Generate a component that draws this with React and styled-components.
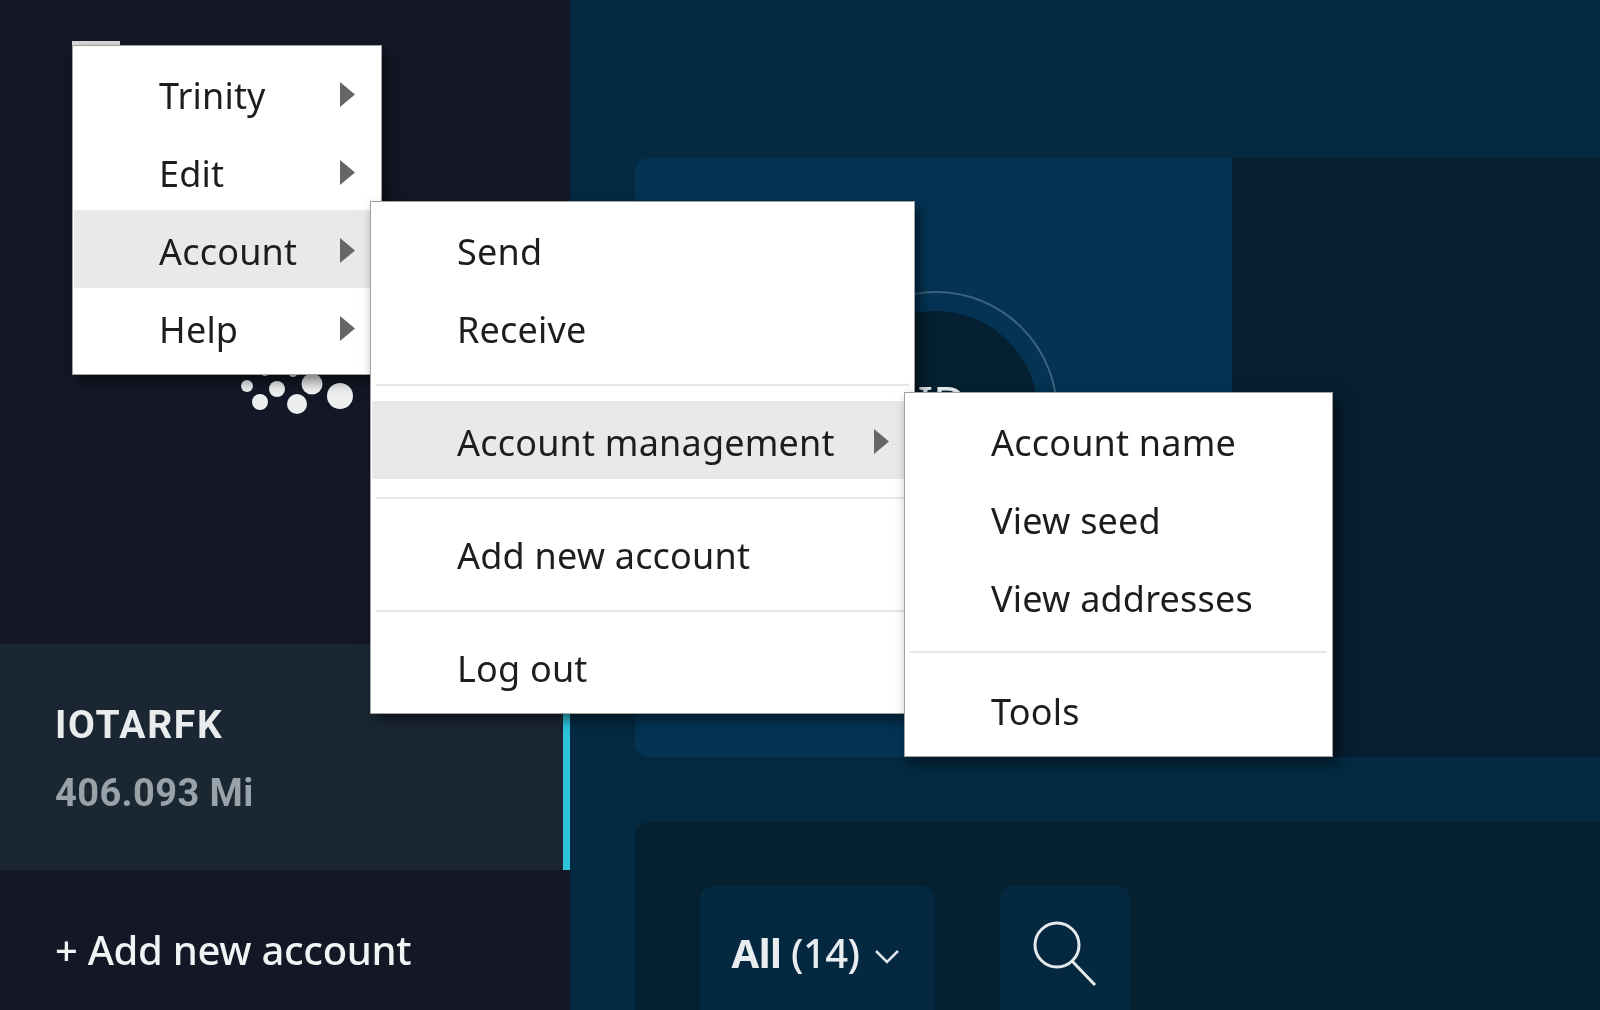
import React from 'react';
import styled, { createGlobalStyle } from 'styled-components';

const Global = createGlobalStyle`
  html, body { margin: 0; padding: 0; background: #022a40; }
  #root { width: 1600px; height: 1010px; overflow: hidden; }
`;

const Page = styled.div`
  position: relative;
  width: 1600px;
  height: 1010px;
  display: flex;
  overflow: hidden;
  background: #032a41;
  font-family: "Noto Sans", "Open Sans", sans-serif;
  filter: blur(0.55px);
`;

const Sidebar = styled.aside`
  width: 570px;
  flex: none;
  display: flex;
  flex-direction: column;
  background: #141725;
`;

const LogoWrap = styled.div`
  height: 644px;
  padding: 370px 0 0 235px;
  box-sizing: border-box;
`;

const AccountRow = styled.div`
  height: 226px;
  box-sizing: border-box;
  padding: 59px 0 0 55px;
  background: #1a2733;
  border-right: 7px solid #2ec5dc;
`;

const AccountName = styled.div`
  font-family: "Roboto", sans-serif;
  font-size: 39px;
  letter-spacing: 1.7px;
  line-height: 44px;
  font-weight: 700;
  color: #e9eced;
`;

const AccountBalance = styled.div`
  margin-top: 24px;
  font-family: "Roboto", sans-serif;
  font-size: 38px;
  letter-spacing: 0.4px;
  line-height: 44px;
  font-weight: 700;
  color: #98a2a9;
`;

const AddAccount = styled.div`
  flex: 1;
  display: flex;
  align-items: center;
  padding: 18px 0 0 55px;
  font-size: 40px;
  font-weight: 500;
  letter-spacing: -0.3px;
  color: #f2f3f4;
`;

const Main = styled.main`
  flex: 1;
  padding: 158px 0 0 65px;
  display: flex;
  flex-direction: column;
  gap: 65px;
`;

const TopRow = styled.div`
  height: 599px;
  display: flex;
`;

const BalancePanel = styled.section`
  position: relative;
  width: 597px;
  background: #043353;
  border-radius: 14px 0 0 14px;
`;

const Ring = styled.div`
  position: absolute;
  left: 179px;
  top: 133px;
  width: 244px;
  height: 244px;
  box-sizing: border-box;
  border: 2px solid #3c627c;
  border-radius: 50%;
  display: flex;
  align-items: center;
  justify-content: center;
`;

const RingInner = styled.div`
  width: 204px;
  height: 204px;
  box-sizing: border-box;
  padding: 0 0 22px 12px;
  border-radius: 50%;
  background: #052030;
  display: flex;
  align-items: center;
  justify-content: center;
  font-size: 46px;
  line-height: 1;
  color: #e8eef2;
`;

const ChartPanel = styled.section`
  flex: 1;
  background: #051f30;
`;

const BottomPanel = styled.section`
  flex: 1;
  display: flex;
  gap: 65px;
  padding: 64px 0 0 65px;
  background: #052030;
  border-radius: 14px 0 0 0;
`;

const FilterButton = styled.div`
  width: ${p => p.$w}px;
  height: 124px;
  box-sizing: border-box;
  padding-top: ${p => p.$pt}px;
  display: flex;
  justify-content: center;
  gap: 14px;
  background: #03283f;
  border-radius: 12px 12px 0 0;
`;

const FilterLabel = styled.span`
  font-size: 40px;
  line-height: 52px;
  color: #e9edf0;
  font-weight: 500;
  letter-spacing: -0.6px;
  b { font-weight: 700; }
`;

const Menu = styled.nav`
  position: absolute;
  left: ${p => p.$left}px;
  top: ${p => p.$top}px;
  width: ${p => p.$width}px;
  box-sizing: border-box;
  padding: 8px 1px;
  background: #fff;
  border: 1px solid #a0a0a0;
  box-shadow: 5px 6px 12px rgba(0, 0, 0, 0.5);
`;

const Item = styled.div`
  position: relative;
  height: 78px;
  display: flex;
  align-items: center;
  padding: 4px 0 0 85px;
  box-sizing: border-box;
  background: ${p => (p.$active ? '#e9e9e9' : 'transparent')};
  color: #1d1d1d;
  font-size: 36px;
  letter-spacing: 0.2px;
  white-space: nowrap;
`;

const Arrow = styled.svg`
  position: absolute;
  right: ${p => p.$right}px;
  top: 28px;
  width: 15px;
  height: 25px;
  fill: #666;
`;

const Separator = styled.div`
  height: 2px;
  margin: ${p => (p.$high ? '16px 4px 17px' : '18px 4px 15px')};
  background: #e6e6e6;
`;

const MenuTab = styled.div`
  position: absolute;
  left: 72px;
  top: 41px;
  width: 48px;
  height: 5px;
  background: #dcdcdc;
`;

const RightArrow = ({ right }) => (
  <Arrow $right={right} viewBox="0 0 15 25"><path d="M0 0 L15 12.5 L0 25 Z" /></Arrow>
);

const Logo = () => (
  <svg width="125" height="50" viewBox="0 0 125 50" fill="#eceef0">
    <circle cx="12" cy="16" r="6" />
    <circle cx="25" cy="32" r="8" />
    <circle cx="42" cy="19" r="8" />
    <circle cx="62" cy="34" r="10" />
    <circle cx="77" cy="14" r="10.5" />
    <circle cx="105" cy="26" r="13" />
    <circle cx="30" cy="2" r="4" />
    <circle cx="58" cy="3" r="4" />
  </svg>
);

export default function App() {
  return (
    <Page>
      <Global />
      <Sidebar>
        <LogoWrap><Logo /></LogoWrap>
        <AccountRow>
          <AccountName>IOTARFK</AccountName>
          <AccountBalance>406.093 Mi</AccountBalance>
        </AccountRow>
        <AddAccount>+ Add new account</AddAccount>
      </Sidebar>
      <Main>
        <TopRow>
          <BalancePanel>
            <Ring><RingInner>ID</RingInner></Ring>
          </BalancePanel>
          <ChartPanel />
        </TopRow>
        <BottomPanel>
          <FilterButton $w={235} $pt={41}>
            <FilterLabel><b>All</b> (14)</FilterLabel>
            <svg width="30" height="52" viewBox="0 0 30 52" fill="none" stroke="#dfe5e9" strokeWidth="2.5"><path d="M3 24 L14 35 L25 24" /></svg>
          </FilterButton>
          <FilterButton $w={130} $pt={34}>
            <svg width="66" height="66" viewBox="0 0 66 66" fill="none" stroke="#e4e9ec" strokeWidth="3"><circle cx="25" cy="25" r="22" /><path d="M40 41 L63 65" /></svg>
          </FilterButton>
        </BottomPanel>
      </Main>

      <MenuTab />
      <Menu $left={72} $top={45} $width={310}>
        <Item>Trinity<RightArrow right={25} /></Item>
        <Item>Edit<RightArrow right={25} /></Item>
        <Item $active>Account<RightArrow right={25} /></Item>
        <Item>Help<RightArrow right={25} /></Item>
      </Menu>
      <Menu $left={370} $top={201} $width={545}>
        <Item>Send</Item>
        <Item>Receive</Item>
        <Separator />
        <Item $active>Account management<RightArrow right={24} /></Item>
        <Separator />
        <Item>Add new account</Item>
        <Separator />
        <Item>Log out</Item>
      </Menu>
      <Menu $left={904} $top={392} $width={429}>
        <Item>Account name</Item>
        <Item>View seed</Item>
        <Item>View addresses</Item>
        <Separator $high />
        <Item>Tools</Item>
      </Menu>
    </Page>
  );
}
